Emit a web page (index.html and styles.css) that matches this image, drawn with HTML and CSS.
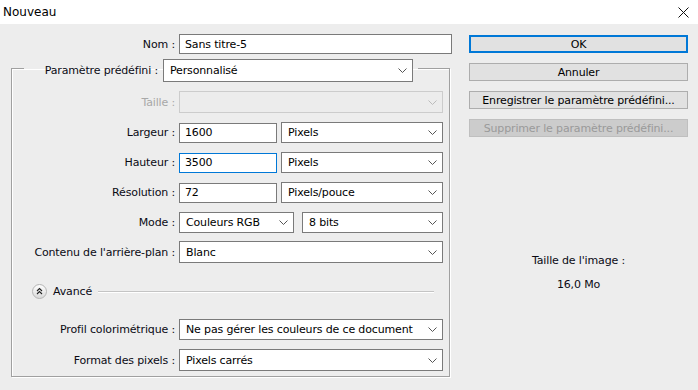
FILE: index.html
```html
<!DOCTYPE html>
<html lang="fr">
<head>
    <meta charset="UTF-8">
    <title>Nouveau</title>
    <link rel="stylesheet" href="styles.css">
</head>
<body>

<div class="titlebar">
    <span class="title">Nouveau</span>
    <svg class="close" width="11" height="11" viewBox="0 0 11 11">
        <path d="M0.5 0.5 L10.5 10.5 M10.5 0.5 L0.5 10.5" stroke="#111" stroke-width="1"/>
    </svg>
</div>

<div class="dialog">
    <div class="left">
        <div class="name-row">
            <span class="lbl name-lbl">Nom :</span>
            <input class="field name-field" value="Sans titre-5">
        </div>

        <fieldset class="group">
            <legend class="preset">
                <span class="preset-lbl">Paramètre prédéfini :</span>
                <div class="select preset-sel"><span>Personnalisé</span><svg class="chev" width="9" height="5" viewBox="0 0 9 5"><path d="M0.5 0.5 L4.5 4.5 L8.5 0.5" fill="none" stroke="#555"/></svg></div>
            </legend>

            <div class="row first tall">
                <span class="lbl disabled">Taille :</span>
                <div class="select full off"><span></span><svg class="chev" width="9" height="5" viewBox="0 0 9 5"><path d="M0.5 0.5 L4.5 4.5 L8.5 0.5" fill="none" stroke="#bbb"/></svg></div>
            </div>

            <div class="row">
                <span class="lbl">Largeur :</span>
                <input class="field num" value="1600">
                <div class="select unit"><span>Pixels</span><svg class="chev" width="9" height="5" viewBox="0 0 9 5"><path d="M0.5 0.5 L4.5 4.5 L8.5 0.5" fill="none" stroke="#555"/></svg></div>
            </div>

            <div class="row">
                <span class="lbl">Hauteur :</span>
                <input class="field num focus" value="3500">
                <div class="select unit"><span>Pixels</span><svg class="chev" width="9" height="5" viewBox="0 0 9 5"><path d="M0.5 0.5 L4.5 4.5 L8.5 0.5" fill="none" stroke="#555"/></svg></div>
            </div>

            <div class="row">
                <span class="lbl">Résolution :</span>
                <input class="field num" value="72">
                <div class="select unit"><span>Pixels/pouce</span><svg class="chev" width="9" height="5" viewBox="0 0 9 5"><path d="M0.5 0.5 L4.5 4.5 L8.5 0.5" fill="none" stroke="#555"/></svg></div>
            </div>

            <div class="row">
                <span class="lbl">Mode :</span>
                <div class="select mode"><span>Couleurs RGB</span><svg class="chev" width="9" height="5" viewBox="0 0 9 5"><path d="M0.5 0.5 L4.5 4.5 L8.5 0.5" fill="none" stroke="#555"/></svg></div>
                <div class="select bits"><span>8 bits</span><svg class="chev" width="9" height="5" viewBox="0 0 9 5"><path d="M0.5 0.5 L4.5 4.5 L8.5 0.5" fill="none" stroke="#555"/></svg></div>
            </div>

            <div class="row tall close-gap">
                <span class="lbl">Contenu de l'arrière-plan :</span>
                <div class="select full"><span>Blanc</span><svg class="chev" width="9" height="5" viewBox="0 0 9 5"><path d="M0.5 0.5 L4.5 4.5 L8.5 0.5" fill="none" stroke="#555"/></svg></div>
            </div>

            <div class="advanced">
                <svg class="toggle" width="15" height="15" viewBox="0 0 15 15">
                    <defs>
                        <linearGradient id="tg" x1="0" y1="0" x2="0" y2="1">
                            <stop offset="0" stop-color="#ffffff"/>
                            <stop offset="1" stop-color="#d8d8d8"/>
                        </linearGradient>
                    </defs>
                    <circle cx="7.5" cy="7.5" r="7" fill="url(#tg)" stroke="#b4b4b4"/>
                    <path d="M5 7 L7.5 4.5 L10 7 M5 10 L7.5 7.5 L10 10" fill="none" stroke="#222" stroke-width="1.1"/>
                </svg>
                <span class="adv-text">Avancé</span>
                <span class="rule"></span>
            </div>

            <div class="row adv-first">
                <span class="lbl">Profil colorimétrique :</span>
                <div class="select full"><span>Ne pas gérer les couleurs de ce document</span><svg class="chev" width="9" height="5" viewBox="0 0 9 5"><path d="M0.5 0.5 L4.5 4.5 L8.5 0.5" fill="none" stroke="#555"/></svg></div>
            </div>

            <div class="row tall">
                <span class="lbl">Format des pixels :</span>
                <div class="select full"><span>Pixels carrés</span><svg class="chev" width="9" height="5" viewBox="0 0 9 5"><path d="M0.5 0.5 L4.5 4.5 L8.5 0.5" fill="none" stroke="#555"/></svg></div>
            </div>
        </fieldset>
    </div>

    <div class="right">
        <button class="btn default">OK</button>
        <button class="btn">Annuler</button>
        <button class="btn">Enregistrer le paramètre prédéfini...</button>
        <button class="btn" disabled>Supprimer le paramètre prédéfini...</button>

        <div class="info">
            <div>Taille de l'image :</div>
            <div>16,0 Mo</div>
        </div>
    </div>
</div>

</body>
</html>
```

FILE: styles.css
```css
body {
    margin: 0;
    width: 698px;
    height: 390px;
    background: #ededed;
    font-family: "DejaVu Sans", sans-serif;
    font-size: 11px;
    letter-spacing: -0.15px;
    color: #0a0a14;
    overflow: hidden;
}
.titlebar {
    height: 24px;
    background: #fff;
    display: flex;
    align-items: center;
    justify-content: space-between;
    padding: 0 9px 0 3px;
}
.title {
    font-size: 12px;
    letter-spacing: 0;
    color: #000;
}
.dialog {
    display: flex;
}
.left {
    width: 452px;
}
.name-row {
    display: flex;
    align-items: center;
    margin-top: 10px;
    height: 20px;
}
.lbl {
    text-align: right;
    margin-right: 4px;
    white-space: nowrap;
}
.name-lbl {
    width: 175px;
}
.disabled {
    color: #a8a8a8;
}
.field {
    box-sizing: border-box;
    height: 20px;
    border: 1px solid #7a7a7a;
    background: #fff;
    padding: 0 0 0 5px;
    font-family: inherit;
    font-size: 11px;
    letter-spacing: -0.15px;
    color: #000;
    outline: none;
}
.field.focus {
    border-color: #0078d7;
}
.name-field {
    width: 273px;
}
.num {
    width: 98px;
    margin-right: 4px;
}
.group {
    box-sizing: border-box;
    width: 439px;
    margin: 0 0 0 11px;
    padding: 0 0 5px 0;
    border: 1px solid #a0a0a0;
    box-shadow: inset 1px 1px 0 #fff, 1px 1px 0 #fff;
}
.preset {
    display: flex;
    align-items: center;
    margin-left: 12px;
    padding: 5px 5px 0 5px;
}
.preset-lbl {
    width: 129px;
    text-align: right;
    margin-right: 5px;
    white-space: nowrap;
}
.select {
    box-sizing: border-box;
    height: 100%;
    border: 1px solid #7a7a7a;
    background: #fff;
    display: flex;
    align-items: center;
    justify-content: space-between;
    padding: 0 5px 0 6px;
    white-space: nowrap;
    color: #000;
}
.preset-sel {
    width: 250px;
    height: 23px;
}
.select.off {
    border-color: #cccccc;
    background: #ececec;
}
.row {
    display: flex;
    align-items: center;
    height: 21px;
    margin-top: 9px;
}
.row .lbl {
    width: 163px;
}
.row.tall {
    height: 22px;
}
.row.close-gap {
    margin-top: 8px;
}
.full {
    width: 264px;
}
.unit {
    width: 162px;
}
.mode {
    width: 115px;
    margin-right: 8px;
}
.bits {
    width: 141px;
}
.advanced {
    display: flex;
    align-items: center;
    height: 15px;
    margin: 21px 15px 0 20px;
}
.adv-text {
    margin: 0 6px 0 6px;
}
.rule {
    flex: 1;
    height: 1px;
    background: #c4c4c4;
    box-shadow: 0 1px 0 #fff;
}
.row.adv-first {
    margin-top: 20px;
}
.right {
    width: 219px;
    margin-left: 17px;
    padding-top: 11px;
    display: flex;
    flex-direction: column;
}
.btn {
    box-sizing: border-box;
    height: 18px;
    margin-bottom: 10px;
    border: 1px solid #adadad;
    background: #e1e1e1;
    font-family: inherit;
    font-size: 11px;
    letter-spacing: -0.15px;
    color: #000;
    padding: 0;
}
.btn.default {
    border: 2px solid #0078d7;
}
.btn:disabled {
    background: #cccccc;
    border-color: #bfbfbf;
    color: #9a9a9a;
}
.info {
    margin-top: 102px;
    text-align: center;
    line-height: 24px;
}
```
